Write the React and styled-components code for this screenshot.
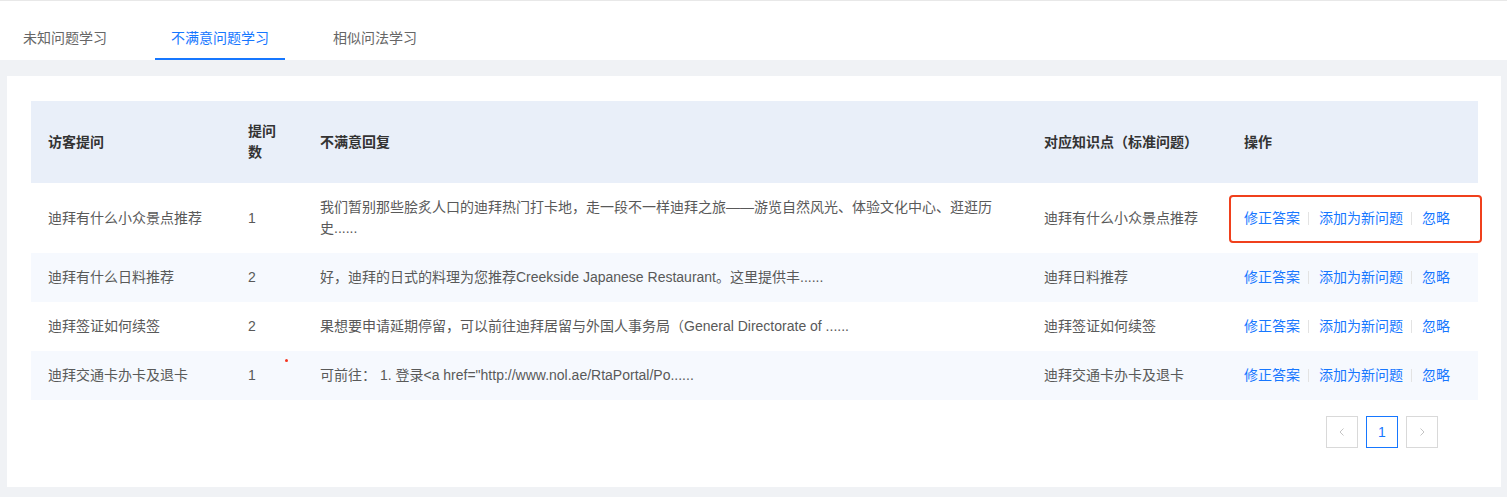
import React from 'react'
import styled, { createGlobalStyle } from 'styled-components'

const GlobalStyle = createGlobalStyle`
  html, body {
    margin: 0;
    padding: 0;
    background: #f0f2f5;
    font-family: "Liberation Sans", "Noto Sans CJK SC", sans-serif;
    font-size: 14px;
    color: #595959;
  }
`

const rows = [
  {
    q: '迪拜有什么小众景点推荐',
    n: 1,
    reply: '我们暂别那些脍炙人口的迪拜热门打卡地，走一段不一样迪拜之旅——游览自然风光、体验文化中心、逛逛历史......',
    kp: '迪拜有什么小众景点推荐',
    marked: true,
  },
  {
    q: '迪拜有什么日料推荐',
    n: 2,
    reply: '好，迪拜的日式的料理为您推荐Creekside Japanese Restaurant。这里提供丰......',
    kp: '迪拜日料推荐',
  },
  {
    q: '迪拜签证如何续签',
    n: 2,
    reply: '果想要申请延期停留，可以前往迪拜居留与外国人事务局（General Directorate of ......',
    kp: '迪拜签证如何续签',
  },
  {
    q: '迪拜交通卡办卡及退卡',
    n: 1,
    reply: '可前往： 1. 登录<a href="http://www.nol.ae/RtaPortal/Po......',
    kp: '迪拜交通卡办卡及退卡',
    dot: true,
  },
]

const Page = styled.div`
  display: flex;
  flex-direction: column;
  min-height: 497px;
`

const TabBar = styled.div`
  display: flex;
  align-items: stretch;
  height: 59px;
  padding-left: 7px;
  background: #fff;
  border-top: 1px solid #e8e8e8;
`

const Tab = styled.div`
  position: relative;
  display: flex;
  align-items: center;
  padding: 13px 16px 0;
  margin-right: 32px;
  color: ${p => (p.$active ? '#1677ff' : '#666')};
  cursor: pointer;

  &::after {
    content: '';
    position: absolute;
    left: 0;
    right: 0;
    bottom: 0;
    height: 2px;
    background: ${p => (p.$active ? '#1677ff' : 'transparent')};
  }
`

const Body = styled.div`
  flex: 1;
  padding: 16px 6px 10px 7px;
`

const Card = styled.div`
  background: #fff;
  padding: 25px 23px 39px 24px;
`

const Table = styled.table`
  width: 100%;
  border-collapse: collapse;
  table-layout: fixed;
`

const Th = styled.th`
  height: 82px;
  padding: 0 17px;
  text-align: left;
  font-weight: 600;
  color: #333;
  background: #e9eff9;
  line-height: 21px;
  vertical-align: middle;
`

const Tr = styled.tr`
  background: ${p => (p.$striped ? '#f6f9fe' : '#fff')};
`

const Td = styled.td`
  position: relative;
  height: ${p => (p.$tall ? '70px' : '49px')};
  padding: 0 17px;
  line-height: 21px;
  color: #595959;
  vertical-align: middle;
  word-break: break-all;
`

const Dot = styled.span`
  position: absolute;
  right: 15px;
  top: 8px;
  width: 3px;
  height: 3px;
  border-radius: 50%;
  background: #f5341f;
`

const Actions = styled.div`
  position: relative;
  display: flex;
  align-items: center;
`

const Highlight = styled.div`
  position: absolute;
  left: -15px;
  right: -21px;
  top: -13px;
  bottom: -14px;
  border: 2px solid #f0401c;
  border-radius: 4px;
  pointer-events: none;
`

const Link = styled.a`
  color: #1677ff;
  cursor: pointer;
  white-space: nowrap;
`

const Sep = styled.span`
  width: 1px;
  height: 13px;
  margin: 0 10px 0 8px;
  background: #e3e3e3;
`

const Pager = styled.div`
  display: flex;
  justify-content: flex-end;
  gap: 8px;
  margin-top: 16px;
  padding-right: 40px;
`

const PageBtn = styled.div`
  width: 32px;
  height: 32px;
  box-sizing: border-box;
  display: flex;
  align-items: center;
  justify-content: center;
  border: 1px solid ${p => (p.$active ? '#1677ff' : '#d9d9d9')};
  color: ${p => (p.$active ? '#1677ff' : '#c0c0c0')};
  font-size: 14px;
  background: #fff;
`

const Chevron = ({ dir }) => (
  <svg width="12" height="12" viewBox="0 0 12 12" fill="none">
    <path
      d={dir === 'left' ? 'M7.5 2.5 L4 6 L7.5 9.5' : 'M4.5 2.5 L8 6 L4.5 9.5'}
      stroke="#c4c4c4"
      strokeWidth="1"
    />
  </svg>
)

const App = () => (
  <Page>
    <GlobalStyle />
    <TabBar>
      <Tab>未知问题学习</Tab>
      <Tab $active>不满意问题学习</Tab>
      <Tab>相似问法学习</Tab>
    </TabBar>
    <Body>
      <Card>
        <Table>
          <colgroup>
            <col style={{ width: 200 }} />
            <col style={{ width: 72 }} />
            <col style={{ width: 724 }} />
            <col style={{ width: 200 }} />
            <col />
          </colgroup>
          <thead>
            <tr>
              <Th>访客提问</Th>
              <Th>提问数</Th>
              <Th>不满意回复</Th>
              <Th>对应知识点（标准问题）</Th>
              <Th>操作</Th>
            </tr>
          </thead>
          <tbody>
            {rows.map((r, i) => (
              <Tr key={i} $striped={i % 2 === 1}>
                <Td $tall={i === 0}>{r.q}</Td>
                <Td>
                  {r.n}
                  {r.dot && <Dot />}
                </Td>
                <Td>{r.reply}</Td>
                <Td>{r.kp}</Td>
                <Td>
                  <Actions>
                    {r.marked && <Highlight />}
                    <Link>修正答案</Link>
                    <Sep />
                    <Link>添加为新问题</Link>
                    <Sep />
                    <Link>忽略</Link>
                  </Actions>
                </Td>
              </Tr>
            ))}
          </tbody>
        </Table>
        <Pager>
          <PageBtn><Chevron dir="left" /></PageBtn>
          <PageBtn $active>1</PageBtn>
          <PageBtn><Chevron dir="right" /></PageBtn>
        </Pager>
      </Card>
    </Body>
  </Page>
)

export default App
